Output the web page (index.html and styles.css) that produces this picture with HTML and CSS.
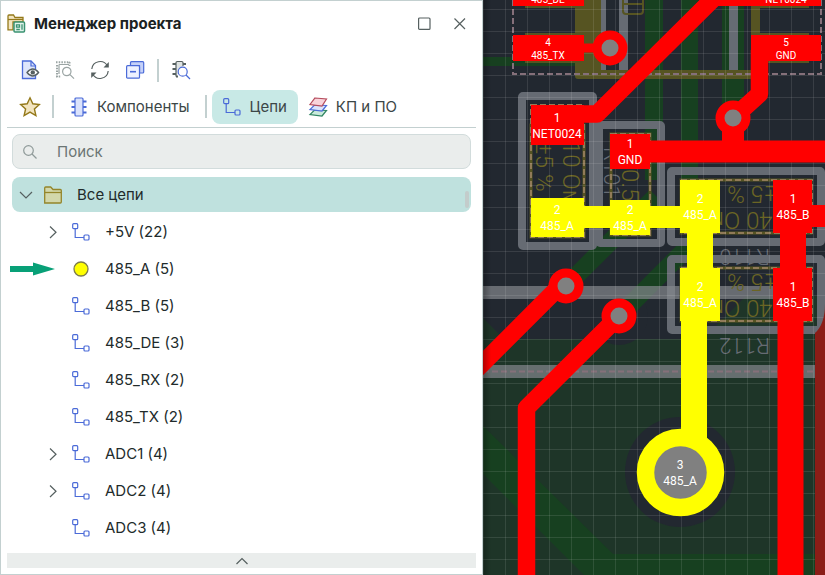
FILE: index.html
```html
<!DOCTYPE html>
<html lang="ru">
<head>
  <meta charset="UTF-8">
  <meta name="viewport" content="width=device-width, initial-scale=1.0">
  <title>Менеджер проекта</title>
  <link rel="stylesheet" href="styles.css">
</head>
<body>
  <!-- shared icons -->
  <svg class="sprite" aria-hidden="true">
    <symbol id="net" viewBox="0 0 20 20">
      <rect x="1.7" y="1.7" width="5" height="5" rx="1"/>
      <rect x="13" y="13" width="5" height="5" rx="1"/>
      <path d="M4.2 6.7V15.5H13"/>
    </symbol>
    <symbol id="right" viewBox="0 0 16 16"><path d="M5 2.5l6 5.7-6 5.8"/></symbol>
  </svg>

  <div class="app">
    <section class="panel">
      <header class="title">
        <svg class="title-icon" width="20" height="20" viewBox="0 0 20 20">
          <path d="M1 15.8h5V8h10V3.5H8L6.5 1H2Q1 1 1 2z" fill="#f3e5c0" stroke="#94791a" stroke-width="1.3"/>
          <path d="M1 5.5h15" stroke="#94791a"/>
          <rect x="7" y="8" width="10.5" height="10" rx="1" fill="#e2f3eb" stroke="#3a9271" stroke-width="1.5"/>
          <path d="M9.5 10.8h3v2.4h-3zM9.3 15.5h3.5M15 10.3v5.5" stroke="#3a9271" stroke-width="1.3"/>
        </svg>
        <h1>Менеджер проекта</h1>
        <button class="icon-btn" aria-label="Развернуть">
          <svg width="16" height="16" viewBox="0 0 16 16"><rect x="1.6" y="2" width="11.4" height="11.4" rx="1"/></svg>
        </button>
        <button class="icon-btn" aria-label="Закрыть">
          <svg width="16" height="16" viewBox="0 0 16 16"><path d="M2.5 2.5L13 13M13 2.5L2.5 13"/></svg>
        </button>
      </header>

      <div class="toolbar">
        <button class="icon-btn" aria-label="Показать">
          <svg width="20" height="20" viewBox="0 0 20 20">
            <path d="M2.5 1H11l4.500 4.500v13h-13z" fill="#dfe6fb" stroke="#4b6bd8" stroke-width="1.3"/>
            <path d="M11 1v5h4.500" stroke="#4b6bd8"/>
            <path d="M7 12.500q5.800-7 11.600 0q-5.800 7-11.600 0z" fill="#fff" stroke="#566060" stroke-width="1.3"/>
            <circle cx="12.8" cy="12.4" r="2.2" fill="#566060" stroke="none"/>
          </svg>
        </button>
        <button class="icon-btn" aria-label="Найти выделенное">
          <svg class="dim" width="20" height="20" viewBox="0 0 20 20">
            <path d="M1 2.2h14M2 5v12M1 16.5h5M14.5 2v4" stroke-width="2" stroke-dasharray="1.5 1.2"/>
            <path d="M4 4.5h10M4 4.5V14"/>
            <circle cx="11.8" cy="11.5" r="4.2"/><path d="M15 14.7l4 4"/>
          </svg>
        </button>
        <button class="icon-btn" aria-label="Обновить">
          <svg width="20" height="20" viewBox="0 0 20 20">
            <path d="M1.8 9A8.3 8.3 0 0 1 17.4 6M18.2 11A8.3 8.3 0 0 1 2.6 14"/>
            <path d="M18.8 2v5.5h-5.3zM1.2 18v-5.5h5.3z" fill="#566060" stroke="none"/>
          </svg>
        </button>
        <button class="icon-btn" aria-label="Свернуть все">
          <svg class="blue" width="20" height="20" viewBox="0 0 20 20">
            <path d="M5.5 5V2.7q0-1 1-1h11.2q1 0 1 1V12q0 1-1 1H14.5V5.7H5.5z" fill="#c5d1f8"/>
            <rect x="1.6" y="5.7" width="12.9" height="12.5" rx="1" fill="#eef2ff"/>
            <path d="M5 11.7h6" stroke-width="1.6"/>
          </svg>
        </button>
        <span class="sep"></span>
        <button class="icon-btn" aria-label="Найти компонент">
          <svg width="20" height="20" viewBox="0 0 20 20">
            <path d="M5 16.5V2.8q0-1.3 1.3-1.3h4.4Q12 1.5 12 2.8V6" fill="#dfe4e3"/>
            <path d="M1.5 4H5M1.5 9H5M1.5 14H5M12 4h3M5 16.5h2" stroke-width="1.8"/>
            <circle class="blue" cx="11.7" cy="11.7" r="4.5" fill="#fff"/>
            <path class="blue" d="M15 15l4 4"/>
          </svg>
        </button>
      </div>

      <nav class="tabs">
        <button class="icon-btn" aria-label="Избранное">
          <svg width="22" height="22" viewBox="0 0 22 22"><path d="M11 1.8l2.8 6 6.5.7-4.9 4.400 1.5 6.700-5.900-3.500-5.900 3.500 1.500-6.700L1.700 8.500l6.500-.7z" fill="#f3e5c0" stroke="#94791a" stroke-width="1.4"/></svg>
        </button>
        <span class="sep"></span>
        <button class="tab">
          <svg class="blue" width="20" height="20" viewBox="0 0 20 20">
            <rect x="6" y="1" width="8" height="18" rx="1" fill="#dbe3fc"/>
            <path d="M2.5 4.5H6M2.5 10H6M2.5 15.5H6M14 4.5h3.5M14 10h3.5M14 15.5h3.5" stroke-width="2"/>
          </svg>
          Компоненты
        </button>
        <span class="sep"></span>
        <button class="tab active">
          <svg class="blue" width="20" height="20"><use href="#net"/></svg>
          Цепи
        </button>
        <button class="tab">
          <svg width="20" height="20" viewBox="0 0 20 20">
            <path d="M6.5 13l12 .5L14 19 2 17.5z" fill="#c9eadb" stroke="#2f8563"/>
            <path d="M6.5 8l12 .5L14 14 2 12.5z" fill="#dbe3fc" stroke="#4b6bd8"/>
            <path d="M7 1l11.5 1L14 9 2 7.5z" fill="#f9d3da" stroke="#b54b5c"/>
          </svg>
          КП и ПО
        </button>
      </nav>

      <label class="search">
        <svg width="16" height="16" viewBox="0 0 16 16"><circle cx="6.5" cy="6.5" r="4.8"/><path d="M10 10l4.500 4.500"/></svg>
        <input type="text" placeholder="Поиск" aria-label="Поиск">
      </label>

      <div class="root">
        <svg class="arrow" width="16" height="16" viewBox="0 0 16 16"><path d="M2 5l6 6 6-6"/></svg>
        <svg width="20" height="20" viewBox="0 0 20 20">
          <path d="M1.7 18V3q0-1 1-1h5L10 4.500h7.300q1 0 1 1V17q0 1-1 1z" fill="#d2d7ab" stroke="#94852a" stroke-width="1.3"/>
          <path d="M1.7 7.5h16.6" stroke="#94852a" stroke-width="1.3"/>
        </svg>
        <span>Все цепи</span>
        <i class="thumb"></i>
      </div>
      <ul class="tree">
        <li>
          <svg class="arrow" width="16" height="16"><use href="#right"/></svg>
          <svg class="blue" width="20" height="20"><use href="#net"/></svg>
          +5V (22)
        </li>
        <li>
          <svg class="pointer" width="46" height="14" viewBox="0 0 46 14"><path d="M0 4h23V.5L45 7 23 13.5V10H0z"/></svg>
          <span class="arrow"></span>
          <svg width="20" height="20" viewBox="0 0 20 20"><circle cx="10" cy="10" r="7" fill="#ff0" stroke="#7d7c4b" stroke-width="1.3"/></svg>
          485_A (5)
        </li>
        <li>
          <span class="arrow"></span>
          <svg class="blue" width="20" height="20"><use href="#net"/></svg>
          485_B (5)
        </li>
        <li>
          <span class="arrow"></span>
          <svg class="blue" width="20" height="20"><use href="#net"/></svg>
          485_DE (3)
        </li>
        <li>
          <span class="arrow"></span>
          <svg class="blue" width="20" height="20"><use href="#net"/></svg>
          485_RX (2)
        </li>
        <li>
          <span class="arrow"></span>
          <svg class="blue" width="20" height="20"><use href="#net"/></svg>
          485_TX (2)
        </li>
        <li>
          <svg class="arrow" width="16" height="16"><use href="#right"/></svg>
          <svg class="blue" width="20" height="20"><use href="#net"/></svg>
          ADC1 (4)
        </li>
        <li>
          <svg class="arrow" width="16" height="16"><use href="#right"/></svg>
          <svg class="blue" width="20" height="20"><use href="#net"/></svg>
          ADC2 (4)
        </li>
        <li>
          <span class="arrow"></span>
          <svg class="blue" width="20" height="20"><use href="#net"/></svg>
          ADC3 (4)
        </li>
      </ul>
      <button class="expander" aria-label="Развернуть">
        <svg width="16" height="16" viewBox="0 0 16 16"><path d="M2.5 11L8 5.5l5.5 5.5"/></svg>
      </button>
    </section>

    <svg class="board" viewBox="483 0 342 575" preserveAspectRatio="xMinYMin slice">
      <defs>
        <pattern id="grid" x="505" y="9" width="22" height="22" patternUnits="userSpaceOnUse">
          <path d="M.5 0v22M0 .5h22" stroke="#fff" stroke-opacity=".1" fill="none"/>
        </pattern>
        <linearGradient id="edge"><stop offset="0" stop-opacity=".3"/><stop offset="1" stop-opacity="0"/></linearGradient>
      </defs>
      <rect x="483" width="342" height="575" fill="#222830"/>

      <!-- bottom layer -->
      <path d="M483 318l21 21h199l43-43h79v279H483z" fill="#1e3528"/>
      <circle cx="619" cy="316" r="29" fill="#222830"/>
      <circle cx="680" cy="472" r="55" fill="#222830"/>
      <g fill="#174020">
        <path d="M483 57h95v9h-95zM645 0h18v180h-18zM681 0h17v180h-17zM722 0h22v120h-22z"/>
        <path d="M483 426l130 128h212v21H584L483 474z"/>
      </g>
      <path d="M566 286l90-90M619 316l90-90" class="trace-green"/>

      <!-- silkscreen -->
      <g class="silk-text">
        <text transform="translate(770 338) rotate(180)">R112</text>
        <text transform="translate(770 249) rotate(180)">R110</text>
        <text transform="translate(604 147) rotate(90)">R101</text>
      </g>
      <g class="silk">
        <rect x="522" y="96" width="71" height="150" rx="1"/>
        <rect x="599" y="125" width="62" height="118" rx="1"/>
        <rect x="671" y="171" width="150" height="71" rx="1"/>
        <rect x="671" y="259" width="150" height="71" rx="1"/>
      </g>
      <path d="M483 286h317v13H483zM483 365h342v13H483z" fill="#85878d" opacity=".7"/>
      <path d="M601 0h5v70h-5zM619 0h9v70h-9zM729 0h9v70h-9z" fill="#666b73"/>
      <path d="M575 0h26v70h150V0h9v79H578q-3 0-3-3zM525 33h50v30h-50zM525 0h50v8h-50zM760 33h49v30h-49zM760 0h49v8h-49z" fill="#565422"/>
      <rect x="623" y="-10" width="20" height="24" rx="3" class="mark thin"/>
      <path d="M623 4h20" class="mark thin"/>
      <g class="value">
        <text transform="translate(563 141) rotate(90)">10 Ом</text>
        <text transform="translate(536 142) rotate(90)">±5 %</text>
        <text transform="translate(622 169) rotate(90)">0.5</text>
        <text transform="translate(777 186) rotate(180)">±5 %</text>
        <text transform="translate(786 212) rotate(180)">240 Ом</text>
        <text transform="translate(777 274) rotate(180)">±5 %</text>
        <text transform="translate(786 300) rotate(180)">240 Ом</text>
      </g>
      <path d="M531 125h53v112h-53zM611 134h39v101h-39zM681 180h130v53H681zM681 268h130v53H681z" class="mark"/>
      <path d="M531 105h53v132h-53zM611 134h39v101h-39zM681 180h131v53H681zM681 268h131v53H681z" class="dashes"/>
      <path d="M513 0v74h308V0M483 371.5h342" class="dashes pink"/>

      <rect x="483" width="342" height="575" fill="url(#grid)"/>

      <!-- top copper -->
      <path d="M825 304q0 20-10 29v242h10z" fill="#8b1d17"/>
      <g class="trace-red">
        <path d="M550 114h47L716-4M565 281L470 376M619 316l-92.500 92V590M759.500 50v44L733 118"/>
        <path d="M575 48h30" stroke-width="9" class="narrow"/>
        <path d="M733 120v31M640 151.500h200M800 216h40" class="wide"/>
        <path d="M793 200v100M790.500 310v280" class="wider"/>
      </g>
      <path d="M513 0h71v6h-71zM700 0h121v6H694zM513 35h71v26h-71zM751 35h70v26h-70zM531 105h53v40h-53zM610 134h40v35h-40zM773 180h39v53h-39zM773 268h39v53h-39z" fill="#f00"/>
      <g class="via">
        <circle cx="610" cy="48" r="13"/>
        <circle cx="733" cy="118" r="13"/>
        <circle cx="566" cy="286" r="13"/>
        <circle cx="619" cy="316" r="13"/>
      </g>

      <!-- highlighted net -->
      <path d="M531 198h53v39h-53zM584 206h96v22h-96zM610 200h40v35h-40zM680 180h40v53h-40zM687 233h26v35h-26zM680 268h40v53h-40zM681 321h26v130h-26z" fill="#ff0"/>
      <circle cx="680.5" cy="472.5" r="35" fill="gray" stroke="#ff0" stroke-width="17.5"/>

      <g class="pad">
        <text x="548" y="3">485_DE</text><text x="786" y="3">NET0024</text>
        <text x="548" y="46">4</text><text x="548" y="59">485_TX</text>
        <text x="786" y="46">5</text><text x="786" y="59">GND</text>
      </g>
      <g class="pad big">
        <text x="557" y="122">1</text><text x="557" y="138">NET0024</text>
        <text x="630" y="148">1</text><text x="630" y="164">GND</text>
        <text x="557" y="214">2</text><text x="557" y="230">485_A</text>
        <text x="630" y="214">2</text><text x="630" y="230">485_A</text>
        <text x="700" y="203">2</text><text x="700" y="219">485_A</text>
        <text x="793" y="203">1</text><text x="793" y="219">485_B</text>
        <text x="700" y="291">2</text><text x="700" y="307">485_A</text>
        <text x="793" y="291">1</text><text x="793" y="307">485_B</text>
        <text x="680" y="469">3</text><text x="680" y="485">485_A</text>
      </g>
      <rect x="483" width="8" height="575" fill="url(#edge)"/>
    </svg>
  </div>
</body>
</html>
```

FILE: styles.css
```css
* {
  box-sizing: border-box;
}
body {
  margin: 0;
  font-family: Inter, "Noto Sans", sans-serif;
  font-size: 15px;
  color: #222b2b;
  background: #222830;
}
.sprite {
  position: absolute;
  width: 0;
  height: 0;
}
.app {
  display: grid;
  grid-template-columns: 483fr 342fr;
  min-height: 100vh;
}
.panel {
  display: flex;
  flex-direction: column;
  background: #fff;
  border: 1px solid #c3d0d0;
  padding: 0 6px 6px;
}
.panel svg {
  flex: none;
  fill: none;
  stroke: #566060;
  stroke-width: 1.2;
}
.panel .blue {
  stroke: #4b6bd8;
}
.panel .dim {
  stroke: #9ba5a4;
}
button {
  font: inherit;
  color: #3c4646;
  background: none;
  border: none;
  padding: 0;
  cursor: pointer;
}
.icon-btn {
  display: flex;
}
.title {
  display: flex;
  align-items: center;
  height: 45px;
  gap: 19px;
}
.title-icon {
  margin-right: -12px;
}
h1 {
  flex: 1;
  margin: 0;
  font-size: 15px;
  font-weight: 700;
  color: #1b2222;
}
.title .icon-btn:last-child {
  margin-right: 8px;
}
.toolbar {
  display: flex;
  align-items: center;
  gap: 15px;
  height: 44px;
  padding: 4px 13px 0;
}
.toolbar .sep {
  margin: 0 -3px;
}
.sep {
  width: 2px;
  height: 23px;
  background: #c3d0d0;
}
.tabs {
  display: flex;
  align-items: center;
  height: 38px;
  padding: 0 12px 4px;
  border-bottom: 1px solid #c3d0d0;
}
.tabs .sep {
  margin: 0 5px 0 11px;
}
.tabs .tab + .sep {
  margin: 0 5px;
}
.tab {
  display: flex;
  align-items: center;
  gap: 8px;
  height: 34px;
  padding: 0 10px;
  border-radius: 8px;
}
.tab.active {
  padding-right: 11px;
  background: #c8e9e6;
}
.search {
  display: flex;
  align-items: center;
  gap: 19px;
  height: 35px;
  margin: 6px 5px 8px;
  padding: 0 9px;
  border: 1px solid #d2dcdc;
  border-radius: 8px;
  background: #eaedec;
}
.panel .search svg {
  stroke: #8f9a99;
}
.search input {
  flex: 1;
  min-width: 0;
  padding: 0;
  border: none;
  outline: none;
  background: none;
  font: inherit;
}
.search input::placeholder {
  color: #6b7574;
}
.root {
  position: relative;
  display: flex;
  align-items: center;
  gap: 9px;
  height: 35px;
  margin: 0 5px;
  padding: 0 6px;
  border-radius: 8px;
  background: #bfe1de;
}
.root span {
  padding-left: 5px;
}
.thumb {
  position: absolute;
  right: 2px;
  bottom: 4px;
  width: 4px;
  height: 17px;
  border-radius: 2px;
  background: #c3cccb;
}
.tree {
  list-style: none;
  margin: 1px 0 0;
  padding: 0;
  flex: 1;
}
.tree li {
  position: relative;
  display: flex;
  align-items: center;
  gap: 14px;
  height: 37px;
  padding-left: 38px;
}
.arrow {
  width: 16px;
}
.tree .arrow {
  margin-right: -4px;
}
.panel .pointer {
  position: absolute;
  left: 3px;
  fill: #08a077;
  stroke: none;
}
.expander {
  display: flex;
  align-items: center;
  justify-content: center;
  height: 15px;
  background: #eaedec;
}

.board {
  width: 100%;
  height: 100%;
}
.trace-green {
  fill: none;
  stroke: #174020;
  stroke-width: 18;
}
.silk {
  fill: none;
  stroke: #666b73;
  stroke-width: 8;
  stroke-linejoin: round;
}
.mark {
  fill: none;
  stroke: #565422;
  stroke-width: 3;
}
.mark.thin {
  stroke-width: 2;
}
.dashes {
  fill: none;
  stroke: #917b58;
  stroke-width: 2;
  stroke-dasharray: 6 3;
}
.dashes.pink {
  stroke: #85707a;
}
.trace-red {
  fill: none;
  stroke: #f00;
  stroke-width: 17.5;
  stroke-linejoin: round;
}
.wide {
  stroke-width: 22;
}
.wider {
  stroke-width: 26;
}
.via {
  fill: gray;
  stroke: #f00;
  stroke-width: 9;
}
.board text {
  font-family: Roboto, "Liberation Sans", sans-serif;
}
.silk-text {
  fill: #666b73;
  font-size: 22px;
  font-weight: 300;
}
.value {
  fill: #6b6524;
  font-size: 24px;
  font-weight: 300;
}
.pad {
  fill: #fff;
  font-size: 10px;
  text-anchor: middle;
}
.big {
  font-size: 12px;
}
```
